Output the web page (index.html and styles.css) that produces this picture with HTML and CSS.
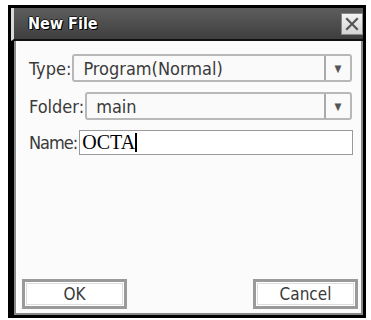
FILE: index.html
```html
<!DOCTYPE html>
<html>
  <head>
    <meta charset="UTF-8">
    <title>New File</title>
    <link rel="stylesheet" href="styles.css">
  </head>
  <body>
    <div class="dialog">
      <div class="titlebar">
        <div class="title">New File</div>
        <div class="close">
          <svg width="14" height="14" viewBox="0 0 14 14">
            <path d="M2 2 L12 12 M12 2 L2 12" stroke="#555" stroke-width="2.2" stroke-linecap="square"/>
          </svg>
        </div>
      </div>
      <div class="content">
        <div class="row">
          <span class="label">Type:</span>
          <div class="select">
            <span class="value">Program(Normal)</span>
            <span class="arrow">&#9660;</span>
          </div>
        </div>
        <div class="row">
          <span class="label">Folder:</span>
          <div class="select">
            <span class="value">main</span>
            <span class="arrow">&#9660;</span>
          </div>
        </div>
        <div class="row">
          <span class="label narrow">Name:</span>
          <div class="input">OCTA<span class="caret"></span></div>
        </div>
        <div class="spacer"></div>
        <div class="buttons">
          <div class="btn">OK</div>
          <div class="btn">Cancel</div>
        </div>
      </div>
    </div>
  </body>
</html>
```

FILE: styles.css
```css
* {
  box-sizing: border-box;
}
html, body {
  margin: 0;
  padding: 0;
  background: #fff;
  width: 371px;
  height: 320px;
}
body {
  padding: 5px 0 0 8px;
  font-family: 'DejaVu Sans', sans-serif;
  font-stretch: condensed;
}

.dialog {
  width: 358px;
  height: 313px;
  background: #000;
  border: 3px solid #000;
  display: flex;
  flex-direction: column;
}

.titlebar {
  height: 33px;
  background: linear-gradient(#5e5e5e, #3e3e3e);
  border-left: 3px solid #d8d8d8;
  border-bottom: 2px solid #111;
  display: flex;
  align-items: center;
  justify-content: space-between;
  padding: 0 0 0 14px;
}
.title {
  color: #fff;
  font-size: 16px;
  font-weight: bold;
  text-shadow: 1px 1px 0 #000, -1px 0 0 #000, 0 -1px 0 #222;
}
.close {
  width: 22px;
  height: 22px;
  background: linear-gradient(#f4f4f4, #d4d4d4);
  border: 1px solid #888;
  display: flex;
  align-items: center;
  justify-content: center;
}

.content {
  flex: 1;
  background: #fbfbfb;
  border: 2px solid #888;
  border-top: none;
  box-shadow: inset 2px 0 0 #fff;
  margin-left: 3px;
  padding: 13px 3px 4px 6px;
  display: flex;
  flex-direction: column;
  gap: 10px;
  color: #3a3a3a;
}

.row {
  display: flex;
  align-items: center;
  padding-left: 7px;
}
.label {
  font-size: 18px;
  margin-right: 1px;
}
.label.narrow {
  letter-spacing: -1px;
  margin-right: 2px;
}

.select {
  flex: 1;
  margin-right: 6px;
  height: 28px;
  border: 2px solid #b8b8b8;
  border-radius: 3px;
  background: #fafafa;
  display: flex;
  align-items: center;
}
.select .value {
  flex: 1;
  padding-left: 9px;
  font-size: 18px;
  color: #3a3a3a;
}
.select .arrow {
  width: 26px;
  height: 100%;
  border-left: 2px solid #aaa;
  display: flex;
  align-items: center;
  justify-content: center;
  font-size: 10px;
  color: #555;
}

.input {
  flex: 1;
  height: 25px;
  margin-right: 5px;
  border: 1px solid #999;
  background: #fff;
  font-family: 'Liberation Serif', serif;
  font-size: 20px;
  color: #000;
  padding-left: 2px;
  display: flex;
  align-items: center;
}
.caret {
  width: 2px;
  height: 19px;
  background: #000;
}

.spacer {
  flex: 1;
}
.buttons {
  display: flex;
  justify-content: space-between;
}
.btn {
  width: 105px;
  height: 30px;
  border: 3px solid #9a9a9a;
  box-shadow: inset 0 0 0 1px #fff, inset 0 0 0 2px #ddd;
  background: #fff;
  font-size: 17px;
  color: #3a3a3a;
  display: flex;
  align-items: center;
  justify-content: center;
}
```
